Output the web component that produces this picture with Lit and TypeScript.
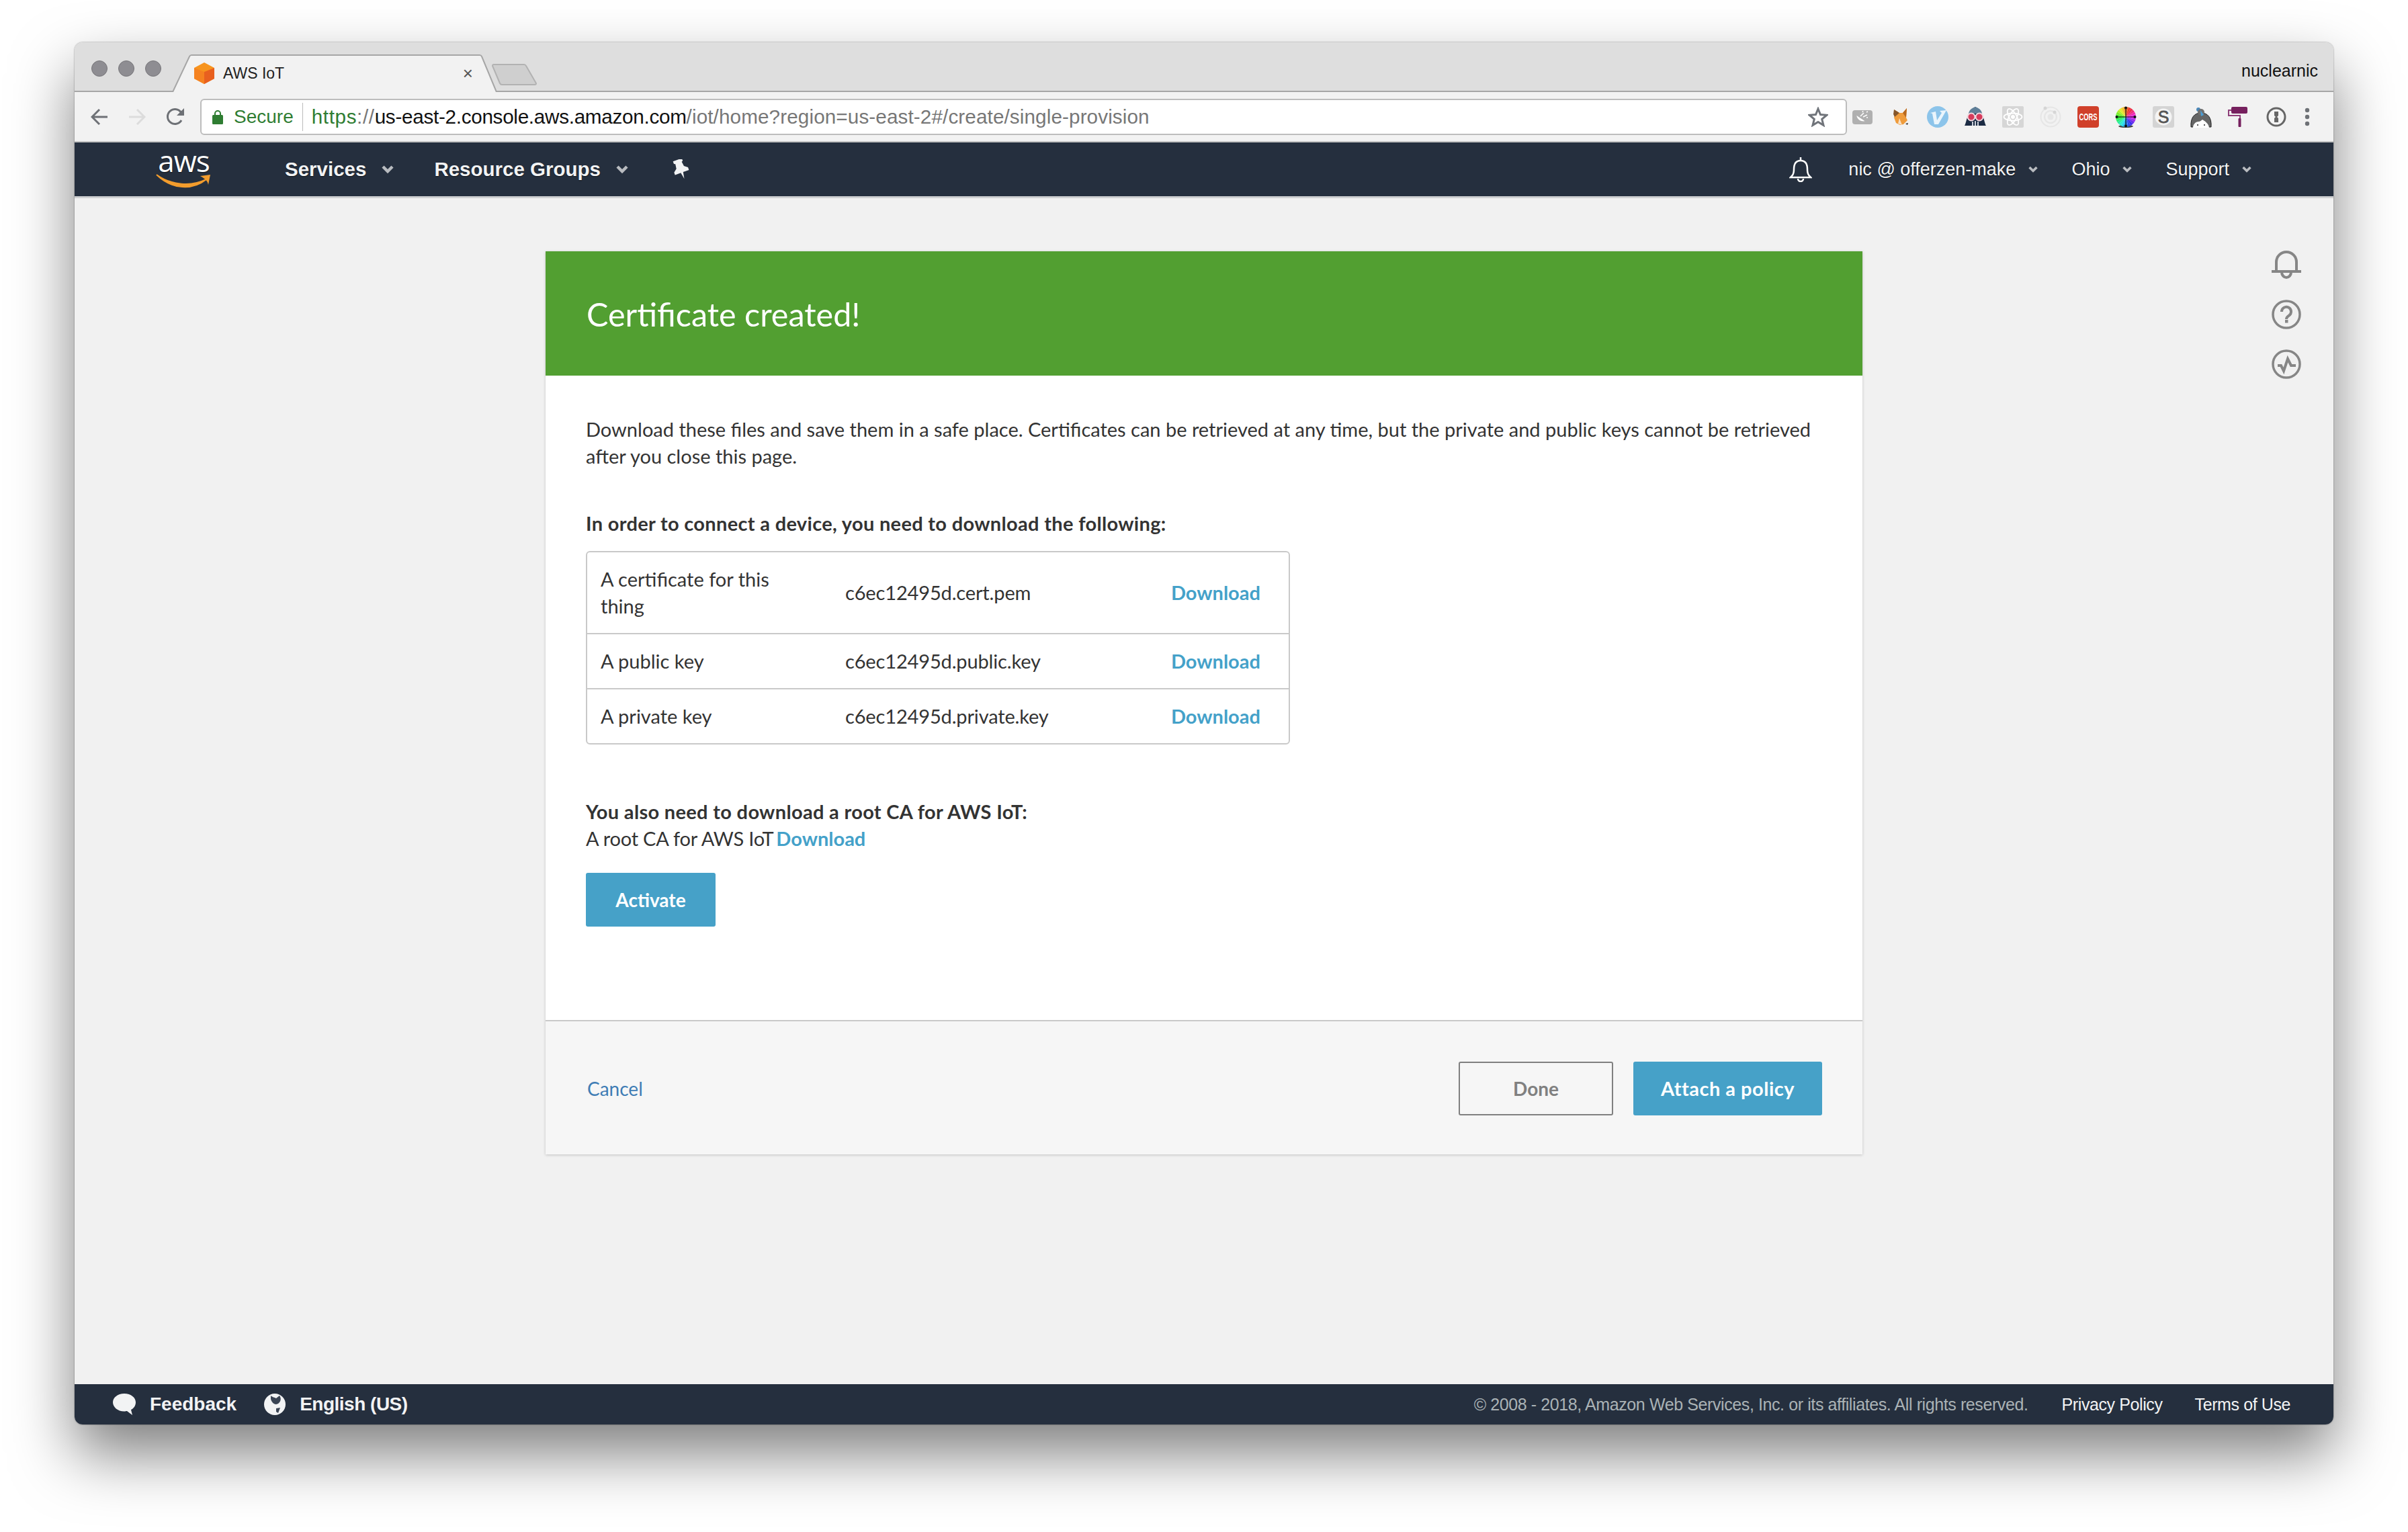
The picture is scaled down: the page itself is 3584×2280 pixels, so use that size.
import { LitElement, html, css, svg } from "lit";
import { customElement } from "lit/decorators.js";

const files = [
  { label: "A certificate for this thing", name: "c6ec12495d.cert.pem" },
  { label: "A public key", name: "c6ec12495d.public.key" },
  { label: "A private key", name: "c6ec12495d.private.key" },
];

const chevron = html`<svg class="chev" width="18" height="12" viewBox="0 0 18 12"><path d="M2 2l7 7 7-7" fill="none" stroke="#b9bcc0" stroke-width="4.500"/></svg>`;

// colour wheel wedges for the picker extension, hue runs anticlockwise from the top
const wheel = Array.from({ length: 24 }, (_, i) => {
  const a = (i * 15 * Math.PI) / 180;
  const b = ((i + 1) * 15 * Math.PI) / 180;
  const x1 = 16 + 15 * Math.sin(a);
  const y1 = 16 - 15 * Math.cos(a);
  const x2 = 16 + 15 * Math.sin(b);
  const y2 = 16 - 15 * Math.cos(b);
  return svg`<path d="M16 16L${x1} ${y1}L${x2} ${y2}z" fill="hsl(${360 - i * 15 + 20} 85% 55%)"/>`;
});

// toolbar extension icons, left to right
const extensions = [
  svg`<rect x="1" y="6" width="30" height="21" rx="4" fill="#b0b0b0"/><path d="M8 13c0 6 5 10 11 10z" fill="#fff" transform="rotate(-8 14 18)"/><path d="M13 15l5-5M17 16l6-3M16 9l1-2M22 9l2-1M22 17h2" stroke="#fff" stroke-width="1.500"/>`,
  svg`<path d="M7 5l8 5h5l6-7-1 14 2 4-6 6-5 1-6-3-3-8 1-4z" fill="#ef9c3c"/><path d="M7 5l8 5-7 6-2-4z" fill="#85562a"/><path d="M20 10l6-7-1 14z" fill="#b8691f"/><path d="M15 18l4 10-6-2z" fill="#f8e0c4"/><path d="M24 26l4-1-1 3z" fill="#333"/>`,
  svg`<circle cx="16" cy="16" r="16" fill="#8cc4ea"/><path d="M5 10l8-2 2 13 7-11-3-3 10-1-12 21h-6l-3-16z" fill="#eaf5fc"/>`,
  svg`<path d="M0 29C3 25 3 8 16 1c13 7 13 24 16 28z" fill="#1c2c44"/><path d="M6 11C7 5 11 3 16 1c5 2 9 4 10 10z" fill="#5f7f98"/><circle cx="10" cy="16" r="5.500" fill="#d63c5c" stroke="#f1d9e0" stroke-width="2"/><circle cx="22" cy="16" r="5.500" fill="#d63c5c" stroke="#f1d9e0" stroke-width="2"/><path d="M12 29v-6M16 29v-7M20 29v-6" stroke="#dfe3ea" stroke-width="1.800"/>`,
  svg`<rect width="32" height="32" rx="2" fill="#d6d6d6"/><g fill="none" stroke="#fff" stroke-width="1.800"><ellipse cx="16" cy="16" rx="13.500" ry="5.500"/><ellipse cx="16" cy="16" rx="13.500" ry="5.500" transform="rotate(60 16 16)"/><ellipse cx="16" cy="16" rx="13.500" ry="5.500" transform="rotate(120 16 16)"/></g><circle cx="16" cy="16" r="3" fill="#fff"/>`,
  svg`<g fill="none" stroke="#e6e6e6"><circle cx="16" cy="16" r="14.500" stroke-width="2"/><circle cx="16" cy="16" r="9" stroke-width="2.500"/></g><circle cx="16" cy="16" r="4.500" fill="#e6e6e6"/><circle cx="8" cy="3" r="2.500" fill="#d6d6d6"/><circle cx="22" cy="9" r="2.500" fill="#d6d6d6"/>`,
  svg`<rect width="32" height="32" rx="4" fill="#d0402a"/><text x="16" y="21" text-anchor="middle" font-family="Liberation Sans" font-weight="700" font-size="14" textLength="27" lengthAdjust="spacingAndGlyphs" fill="#fff">CORS</text>`,
  svg`<ellipse cx="16" cy="30" rx="11" ry="2" fill="#444"/>${wheel}<path d="M16 1v30M1 16h30" stroke="#111" stroke-width="1.200"/><circle cx="2.500" cy="16" r="2" fill="#111"/><circle cx="29.500" cy="16" r="2" fill="#111"/><circle cx="16" cy="2.500" r="2" fill="#111"/><circle cx="16" cy="29.500" r="2" fill="#111"/>`,
  svg`<rect width="32" height="32" rx="3" fill="#d4d4d4"/><circle cx="16" cy="16" r="12.500" fill="#f4f4f4"/><text x="16" y="25" text-anchor="middle" font-family="Liberation Sans" font-weight="400" font-size="25" stroke="#555" stroke-width="0.800" fill="#555">S</text>`,
  svg`<path d="M1 31c-1-14 5-21 15-21s16 7 15 21z" fill="#666" stroke="#222"/><circle cx="12" cy="5" r="3" fill="#4a87b8"/><circle cx="16" cy="9" r="5" fill="#707070"/><path d="M4 32c0-5 4-9 8-9 3 0 4-2 6-3 3 2 9 5 10 12z" fill="#fff"/><path d="M15 6l5 7-4 2z" fill="#4a9fd8"/><circle cx="11" cy="28" r="1" fill="#222"/><circle cx="21" cy="28" r="1" fill="#222"/>`,
  svg`<rect x="5" y="1" width="24" height="10" rx="2" fill="#76205e"/><path d="M5 6H1v8h17v5" fill="none" stroke="#8e3f79" stroke-width="2"/><rect x="15.500" y="18" width="4" height="13" rx="1" fill="#76205e"/>`,
  svg`<circle cx="16" cy="16" r="13" fill="#f4f4f4" stroke="#666" stroke-width="3"/><path d="M13 8h6v6l-2 2 2 2v6h-6v-6l2-2-2-2z" fill="#666"/>`,
];

@customElement("app-root")
export class AppRoot extends LitElement {
  static styles = css`
    :host {
      display: block;
      width: 3584px;
      height: 2280px;
      padding: 63px 111px 160px;
      box-sizing: border-box;
      background: #fff;
      font-family: "Liberation Sans", Arial, sans-serif;
      overflow: hidden;
    }
    .window {
      height: 100%;
      display: flex;
      flex-direction: column;
      border-radius: 12px;
      overflow: hidden;
    }
    .shadow {
      height: 100%;
      border-radius: 12px;
      box-shadow: 0 44px 90px rgba(0, 0, 0, 0.5), 0 0 2px rgba(0, 0, 0, 0.5);
    }

    /* browser frame */
    .titlebar {
      height: 74px;
      flex: none;
      box-sizing: border-box;
      display: flex;
      align-items: flex-end;
      background: #dedede;
      border-bottom: 2px solid #a6a6a6;
      position: relative;
    }
    .lights {
      display: flex;
      gap: 16px;
      align-self: flex-start;
      margin: 27px 0 0 25px;
    }
    .lights i {
      width: 24px;
      height: 24px;
      box-sizing: border-box;
      border-radius: 50%;
      background: #8e8d92;
      border: 1px solid #77767a;
    }
    .tab {
      position: relative;
      width: 484px;
      height: 56px;
      margin: 0 0 -2px 16px;
      display: flex;
      align-items: center;
      box-sizing: border-box;
      padding: 0 0 0 32px;
      font-size: 23px;
      color: #222;
    }
    .tab > svg.bg {
      position: absolute;
      left: 0;
      top: 0;
    }
    .tab .fav {
      position: relative;
    }
    .tab span {
      position: relative;
      margin-left: 12px;
    }
    .tab .close {
      margin-left: auto;
      margin-right: 36px;
      color: #555;
      font-size: 26px;
    }
    .newtab {
      margin: 0 0 8px -8px;
    }
    .user {
      position: absolute;
      right: 23px;
      top: 28px;
      font-size: 25px;
      color: #111;
    }
    .toolbar {
      height: 75px;
      flex: none;
      box-sizing: border-box;
      display: flex;
      align-items: center;
      padding: 0 0 0 24px;
      background: #f2f2f2;
      border-bottom: 2px solid #c4c4c4;
    }
    .toolbar .navbtn {
      margin-right: 30px;
      flex: none;
    }
    .url {
      width: 2451px;
      height: 54px;
      margin-left: -7px;
      box-sizing: border-box;
      flex: none;
      display: flex;
      align-items: center;
      background: #fff;
      border: 2px solid #bdbdbd;
      border-radius: 6px;
      padding: 0 0 0 16px;
      font-size: 29.7px;
      color: #777;
      white-space: nowrap;
    }
    .secure {
      color: #2f7d32;
      font-size: 28px;
      margin-left: 16px;
      padding-right: 13px;
      border-right: 1px solid #bbb;
      line-height: 42px;
    }
    .url .addr {
      margin-left: 13px;
    }
    .url b {
      font-weight: 400;
      color: #111;
      letter-spacing: -0.3px;
    }
    .url em {
      font-style: normal;
      color: #2f7d32;
      letter-spacing: 0.6px;
    }
    .url .scheme {
      letter-spacing: 0.6px;
    }
    .url .path {
      letter-spacing: 0.1px;
    }
    .url svg.star {
      margin-left: auto;
      margin-right: 26px;
    }
    .exts {
      display: flex;
      gap: 24px;
      margin-left: 7px;
      align-items: center;
    }
    .dots {
      margin-left: 26px;
      flex: none;
    }

    /* console nav */
    .nav {
      height: 83px;
      flex: none;
      box-sizing: border-box;
      display: flex;
      align-items: center;
      background: #252f3e;
      border-bottom: 3px solid #cfd0d2;
      padding: 0 122px 0 121px;
      color: #f2f3f4;
      text-shadow: 0 1px 1px rgba(0, 0, 0, 0.7);
    }
    .logo {
      width: 83px;
      display: flex;
      flex-direction: column;
      align-items: center;
      margin-right: 109px;
      color: #fff;
      font-family: "Open Sans", sans-serif;
      font-size: 44px;
      line-height: 30px;
    }
    .logo span {
      letter-spacing: -1px;
    }
    .logo svg {
      margin-top: 2px;
    }
    .menu {
      display: flex;
      align-items: center;
      gap: 23px;
      font-weight: 700;
      font-size: 29.5px;
      margin-right: 60px;
    }
    .pin {
      margin-left: 4px;
    }
    .right {
      margin-left: auto;
      display: flex;
      align-items: center;
      font-size: 27px;
    }
    .right .menu {
      font-weight: 400;
      font-size: 27px;
      gap: 19px;
      margin: 0 0 0 50px;
    }
    .right .menu:nth-child(2) {
      margin-left: 54px;
    }
    .right .chev {
      width: 14px;
    }

    /* page */
    .main {
      flex: 1;
      display: flex;
      background: #f1f1f1;
      min-height: 0;
    }
    .card {
      width: 1960px;
      margin: 79px 0 0 701px;
      align-self: flex-start;
      background: #fff;
      box-shadow: 0 1px 4px rgba(0, 0, 0, 0.2);
      font-family: Lato, sans-serif;
      font-size: 29px;
      line-height: 40px;
      color: #333;
    }
    .banner {
      height: 185px;
      box-sizing: border-box;
      padding-left: 61px;
      display: flex;
      align-items: center;
      background: #529f31;
      color: #fff;
      font-size: 48.5px;
    }
    .body {
      padding: 60px 60px 139px;
    }
    .body p {
      margin: 0;
    }
    .body .strong {
      font-weight: 700;
      letter-spacing: 0.32px;
    }
    .gap-60 {
      margin-top: 60px !important;
    }
    .gap-80 {
      margin-top: 80px !important;
    }
    .rootca {
      letter-spacing: -0.2px;
    }
    .rootca a {
      letter-spacing: 0;
      margin-left: 4px;
    }
    .files {
      width: 1048px;
      margin-top: 21px;
      box-sizing: border-box;
      border: 2px solid #c9c9c9;
      border-radius: 6px;
    }
    .row {
      display: grid;
      grid-template-columns: 364px 485px 1fr;
      align-items: center;
      padding: 20px 20px;
    }
    .row + .row {
      border-top: 2px solid #c9c9c9;
    }
    .row .label {
      width: 300px;
    }
    .row .name {
      letter-spacing: -0.15px;
    }
    a {
      color: #44a1c9;
      font-weight: 700;
      text-decoration: none;
    }
    .btn {
      box-sizing: border-box;
      height: 80px;
      display: flex;
      align-items: center;
      justify-content: center;
      border-radius: 3px;
      font-size: 28px;
      font-weight: 700;
      background: #46a1c8;
      color: #fff;
    }
    .activate {
      width: 193px;
      margin-top: 31px;
    }
    .foot {
      height: 200px;
      box-sizing: border-box;
      border-top: 2px solid #c9c9c9;
      background: #f6f6f6;
      display: flex;
      align-items: center;
      padding: 2px 60px 0;
      gap: 30px;
    }
    .cancel {
      margin-right: auto;
      margin-left: 2px;
      color: #3f7db5;
      font-size: 28px;
      font-weight: 400;
    }
    .done {
      width: 230px;
      background: #f6f6f6;
      border: 2px solid #808080;
      color: #808080;
    }
    .attach {
      width: 281px;
      font-size: 29px;
      letter-spacing: 0.5px;
    }
    .rail {
      margin: 77px 48px 0 auto;
      display: flex;
      flex-direction: column;
      gap: 30px;
    }

    /* page footer */
    .footer {
      height: 60px;
      flex: none;
      box-sizing: border-box;
      display: flex;
      align-items: center;
      padding: 0 64px 0 57px;
      background: #252f3e;
      color: #f2f3f4;
    }
    .footer .fb {
      display: flex;
      align-items: center;
      font-weight: 700;
      font-size: 28px;
      gap: 21px;
      margin-right: 41px;
    }
    .footer .fb + .fb {
      letter-spacing: -0.5px;
    }
    .legal {
      margin-left: auto;
      display: flex;
      font-size: 25px;
      letter-spacing: -0.4px;
      gap: 48px;
    }
    .legal span:first-child {
      color: #aab2b5;
      margin-right: 2px;
    }
  `;

  render() {
    return html`
      <div class="shadow">
        <div class="window">
          <div class="titlebar">
            <div class="lights"><i></i><i></i><i></i></div>
            <div class="tab">
              <svg class="bg" width="484" height="56" viewBox="0 0 484 56"><path d="M0 56h1L26 3q1-2 3-2h429q2 0 3 2l22 53h1" fill="#f2f2f2" stroke="#a6a6a6" stroke-width="2"/></svg>
              <svg class="fav" width="32" height="32" viewBox="0 0 32 32"><path d="M16 0l15 8v16l-15 8-15-8V8z" fill="#f7941e"/><path d="M16 14L1 8v16l15 8z" fill="#f58220"/><path d="M16 14l15-6v16l-15 8z" fill="#e8601f"/></svg>
              <span>AWS IoT</span>
              <span class="close">×</span>
            </div>
            <svg class="newtab" width="68" height="32" viewBox="0 0 68 32"><path d="M3 1h45q2 0 3 2l15 26q0 2-2 2H15q-2 0-3-2L1 3q0-2 2-2z" fill="#cfcfcf" stroke="#b2b2b2" stroke-width="2"/></svg>
            <div class="user">nuclearnic</div>
          </div>

          <div class="toolbar">
            <svg class="navbtn" width="26" height="26" viewBox="0 0 26 26"><path d="M25 13H2M13 2L2 13l11 11" fill="none" stroke="#6e7176" stroke-width="3"/></svg>
            <svg class="navbtn" width="26" height="26" viewBox="0 0 26 26"><path d="M1 13h23M13 2l11 11-11 11" fill="none" stroke="#dcdcdc" stroke-width="3"/></svg>
            <svg class="navbtn" width="28" height="28" viewBox="0 0 28 28"><path d="M23 19a11 11 0 1 1 0-11" fill="none" stroke="#6e7176" stroke-width="3"/><path d="M27 1v11H16z" fill="#6e7176"/></svg>
            <div class="url">
              <svg width="16" height="22" viewBox="0 0 16 22"><path d="M4 9V6a4 4 0 0 1 8 0v3" fill="none" stroke="#2f7d32" stroke-width="2"/><rect y="8" width="16" height="14" rx="1.500" fill="#2f7d32"/></svg>
              <span class="secure">Secure</span>
              <span class="addr"><em>https</em><span class="scheme">://</span><b>us-east-2.console.aws.amazon.com</b><span class="path">/iot/home?region=us-east-2#/create/single-provision</span></span>
              <svg class="star" width="30" height="30" viewBox="0 0 30 30"><path d="M15 3l3.500 8.600 9.300.7-7.100 6 2.300 9.100L15 22.500l-8 4.900 2.300-9.100-7.100-6 9.300-.7z" fill="none" stroke="#70747a" stroke-width="3"/></svg>
            </div>
            <div class="exts">
              ${extensions.map((e) => html`<svg width="32" height="32" viewBox="0 0 32 32">${e}</svg>`)}
            </div>
            <svg class="dots" width="8" height="28" viewBox="0 0 8 28"><circle cx="4" cy="4" r="3.200" fill="#6e7176"/><circle cx="4" cy="14" r="3.200" fill="#6e7176"/><circle cx="4" cy="24" r="3.200" fill="#6e7176"/></svg>
          </div>

          <div class="nav">
            <div class="logo">
              <span>aws</span>
              <svg width="83" height="24" viewBox="0 0 83 24"><path d="M1 4c22 16 52 18 74 7-20 16-50 16-74-7z" fill="#f29c2d" stroke="#f29c2d" stroke-width="2"/><path d="M66 6l15-2-3 15c-1-5-3-8-12-13z" fill="#f29c2d"/></svg>
            </div>
            <div class="menu">Services ${chevron}</div>
            <div class="menu">Resource Groups ${chevron}</div>
            <svg class="pin" width="28" height="30" viewBox="0 0 28 30"><g transform="rotate(-20 14 14)"><path d="M7 0h14v4l-2 1 1 7 5 4v4H3v-4l5-4 1-7-2-1z" fill="#f2f3f4"/><path d="M12 19h4l-2 11z" fill="#f2f3f4"/></g></svg>
            <div class="right">
              <svg width="34" height="38" viewBox="0 0 34 38"><path d="M2 31c3-3 5-5 5-12 0-8 3-13 10-13s10 5 10 13c0 7 2 9 5 12z" fill="none" stroke="#fff" stroke-width="2.500"/><path d="M17 1v5M13 33a4 4 0 0 0 8 0" fill="none" stroke="#fff" stroke-width="2.500"/></svg>
              <div class="menu">nic @ offerzen-make ${chevron}</div>
              <div class="menu">Ohio ${chevron}</div>
              <div class="menu">Support ${chevron}</div>
            </div>
          </div>

          <div class="main">
            <div class="card">
              <div class="banner">Certificate created!</div>
              <div class="body">
                <p>Download these files and save them in a safe place. Certificates can be retrieved at any time, but the private and public keys cannot be retrieved after you close this page.</p>
                <p class="strong gap-60">In order to connect a device, you need to download the following:</p>
                <div class="files">
                  ${files.map(
                    (f) => html`<div class="row">
                      <div class="label">${f.label}</div>
                      <div class="name">${f.name}</div>
                      <a href="#">Download</a>
                    </div>`
                  )}
                </div>
                <p class="strong gap-80">You also need to download a root CA for AWS IoT:</p>
                <p class="rootca">A root CA for AWS IoT<a href="#">Download</a></p>
                <div class="btn activate">Activate</div>
              </div>
              <div class="foot">
                <a class="cancel" href="#">Cancel</a>
                <div class="btn done">Done</div>
                <div class="btn attach">Attach a policy</div>
              </div>
            </div>
            <div class="rail">
              <svg width="44" height="44" viewBox="0 0 44 44"><path d="M7 32V18a15 15 0 0 1 30 0v14M0 32h44M15 33a7 8 0 0 0 14 0" fill="none" stroke="#868686" stroke-width="4"/></svg>
              <svg width="44" height="44" viewBox="0 0 44 44"><circle cx="22" cy="22" r="20" fill="none" stroke="#868686" stroke-width="3.500"/><path d="M15 18a7 7 0 1 1 11 5.500c-2.500 2-4 2.500-4 5.500" fill="none" stroke="#868686" stroke-width="4"/><rect x="20" y="30" width="4.500" height="4.500" fill="#868686"/></svg>
              <svg width="44" height="44" viewBox="0 0 44 44"><circle cx="22" cy="22" r="20" fill="none" stroke="#868686" stroke-width="3.500"/><path d="M9 24l5 0 4 8 6-18 5 10h7" fill="none" stroke="#868686" stroke-width="4"/></svg>
            </div>
          </div>

          <div class="footer">
            <div class="fb">
              <svg width="34" height="32" viewBox="0 0 34 32"><path d="M17 0c10 0 17 6 17 13 0 5-3 9-7 11l2 8-8-6c-1 0-3 .5-4 .5C7 26.500 0 20 0 13S7 0 17 0z" fill="#f2f3f4"/></svg>
              Feedback
            </div>
            <div class="fb">
              <svg width="32" height="32" viewBox="0 0 32 32"><circle cx="16" cy="16" r="16" fill="#f2f3f4"/><path d="M10 3c3 3 5 2 8 4l5-4c3 4 2 9-2 12l-3 1c-4 0-7-4-8-8zM18 22l6-1-3 8-3-2z" fill="#3a4454"/></svg>
              English (US)
            </div>
            <div class="legal">
              <span>© 2008 - 2018, Amazon Web Services, Inc. or its affiliates. All rights reserved.</span>
              <span>Privacy Policy</span>
              <span>Terms of Use</span>
            </div>
          </div>
        </div>
      </div>
    `;
  }
}
